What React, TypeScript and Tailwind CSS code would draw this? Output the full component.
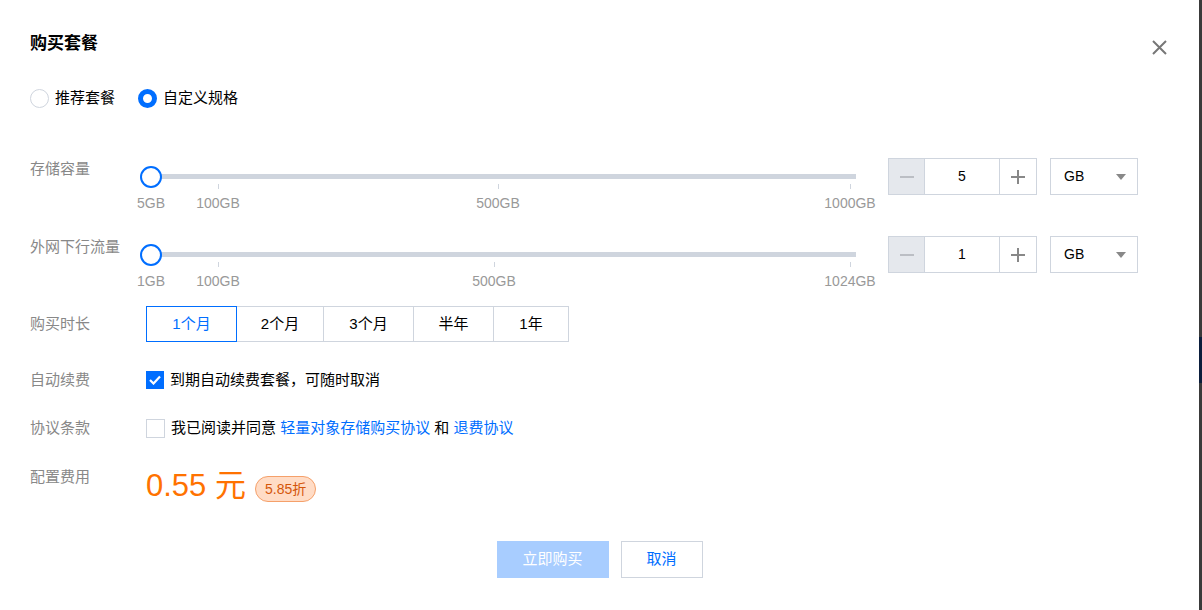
import { useState } from "react";

const font = { fontFamily: '"Liberation Sans", "Noto Sans CJK SC", sans-serif' };

interface Mark {
  label: string;
  tickClass?: string;
  labelClass: string;
}

const storageMarks: Mark[] = [
  { label: "5GB", labelClass: "left-[5px]" },
  { label: "100GB", tickClass: "left-[72px]", labelClass: "left-[72px]" },
  { label: "500GB", tickClass: "left-[352px]", labelClass: "left-[352px]" },
  { label: "1000GB", tickClass: "left-[704px]", labelClass: "left-[704px]" },
];

const trafficMarks: Mark[] = [
  { label: "1GB", labelClass: "left-[5px]" },
  { label: "100GB", tickClass: "left-[72px]", labelClass: "left-[72px]" },
  { label: "500GB", tickClass: "left-[348px]", labelClass: "left-[348px]" },
  { label: "1024GB", tickClass: "left-[704px]", labelClass: "left-[704px]" },
];

const durations = [
  { label: "1个月", width: "w-[91px]" },
  { label: "2个月", width: "w-[88px]" },
  { label: "3个月", width: "w-[91px]" },
  { label: "半年", width: "w-[81px]" },
  { label: "1年", width: "w-[76px]" },
];

const Slider = ({ marks }: { marks: Mark[] }) => (
  <div className="relative w-[732px] h-[55px]">
    <div className="absolute left-[5px] top-[16px] w-[705px] h-[5px] bg-[#cfd5de]" />
    {marks.map((m) =>
      m.tickClass ? (
        <div key={"t" + m.label} className={`absolute top-[26px] w-px h-[5px] bg-[#cfd5de] ${m.tickClass}`} />
      ) : null
    )}
    {marks.map((m) => (
      <span
        key={m.label}
        className={`absolute top-[35px] -translate-x-1/2 text-[14px] leading-[20px] text-[#999] whitespace-nowrap ${m.labelClass}`}
      >
        {m.label}
      </span>
    ))}
    <div className="absolute left-[-6px] top-[8px] w-[22px] h-[22px] rounded-full border-2 border-[#006eff] bg-white" />
  </div>
);

const NumberInput = ({ value }: { value: string }) => (
  <div className="flex h-[37px] border border-[#cfd5de] ml-[10px]">
    <div className="w-[36px] bg-[#e5e8ed] border-r border-[#cfd5de] flex items-center justify-center">
      <div className="w-[14px] h-[2px] bg-[#bbbec4]" />
    </div>
    <div className="w-[74px] flex items-center justify-center text-[14px] text-[#000]">{value}</div>
    <div className="w-[37px] border-l border-[#cfd5de] flex items-center justify-center">
      <svg width="14" height="14" viewBox="0 0 14 14">
        <path d="M7 0v14M0 7h14" stroke="#888" strokeWidth="2" />
      </svg>
    </div>
  </div>
);

const UnitSelect = () => (
  <div className="ml-[13px] w-[88px] h-[37px] border border-[#cfd5de] flex items-center justify-between pl-[13px] pr-[11px] text-[14px] text-[#000]">
    <span>GB</span>
    <svg width="10" height="6" viewBox="0 0 10 6">
      <path d="M0 0h10L5 6z" fill="#888" />
    </svg>
  </div>
);

const Label = ({ children }: { children: React.ReactNode }) => (
  <div className="w-[116px] shrink-0 text-[15px] leading-[22px] text-[#888]">{children}</div>
);

export default function App() {
  const [mode, setMode] = useState("custom");
  const [duration, setDuration] = useState("1个月");
  const [autoRenew, setAutoRenew] = useState(true);
  const [agree, setAgree] = useState(false);

  return (
    <div className="flex h-[610px] w-full" style={font}>
      <div className="relative flex-1 bg-white px-[30px] pt-[32px] text-[#333]">
        <button className="absolute right-[32px] top-[40px] w-[15px] h-[15px]">
          <svg width="15" height="15" viewBox="0 0 15 15">
            <path d="M1 1l13 13M14 1L1 14" stroke="#777" strokeWidth="2" />
          </svg>
        </button>

        <h2 className="h-[24px] text-[17px] leading-[24px] font-bold text-[#000]">购买套餐</h2>

        <div className="mt-[32px] flex items-center h-[20px] text-[15px] text-[#000]">
          <label className="flex items-center cursor-pointer" onClick={() => setMode("recommend")}>
            {mode === "recommend" ? (
              <span className="w-[19px] h-[19px] rounded-full border-[5px] border-[#006eff] bg-white" />
            ) : (
              <span className="w-[19px] h-[19px] rounded-full border border-[#cfd5de] bg-white" />
            )}
            <span className="ml-[6px]">推荐套餐</span>
          </label>
          <label className="ml-[23px] flex items-center cursor-pointer" onClick={() => setMode("custom")}>
            {mode === "custom" ? (
              <span className="w-[19px] h-[19px] rounded-full border-[5px] border-[#006eff] bg-white" />
            ) : (
              <span className="w-[19px] h-[19px] rounded-full border border-[#cfd5de] bg-white" />
            )}
            <span className="ml-[6px]">自定义规格</span>
          </label>
        </div>

        <div className="mt-[50px] flex items-start h-[78px]">
          <Label>存储容量</Label>
          <Slider marks={storageMarks} />
          <NumberInput value="5" />
          <UnitSelect />
        </div>

        <div className="flex items-start h-[70px]">
          <Label>外网下行流量</Label>
          <Slider marks={trafficMarks} />
          <NumberInput value="1" />
          <UnitSelect />
        </div>

        <div className="flex items-start">
          <div className="w-[116px] shrink-0 text-[15px] leading-[36px] text-[#888]">购买时长</div>
          <div className="flex">
            {durations.map((d, i) => (
              <button
                key={d.label}
                onClick={() => setDuration(d.label)}
                className={`h-[36px] ${d.width} border text-[15px] ${i > 0 ? "-ml-px" : ""} ${
                  duration === d.label ? "relative z-10 border-[#006eff] text-[#006eff]" : "border-[#cfd5de] text-[#000]"
                }`}
              >
                {d.label}
              </button>
            ))}
          </div>
        </div>

        <div className="mt-[27px] flex items-center h-[22px]">
          <Label>自动续费</Label>
          <button
            onClick={() => setAutoRenew(!autoRenew)}
            className={`w-[18px] h-[18px] flex items-center justify-center ${
              autoRenew ? "bg-[#006eff]" : "border border-[#cfd5de] bg-white"
            }`}
          >
            {autoRenew && (
              <svg width="12" height="10" viewBox="0 0 12 10">
                <path d="M1 5l3.5 3.5L11 1.5" stroke="#fff" strokeWidth="2.2" fill="none" />
              </svg>
            )}
          </button>
          <span className="ml-[6px] text-[15px] text-[#000]">到期自动续费套餐，可随时取消</span>
        </div>

        <div className="mt-[26px] flex items-center h-[22px]">
          <Label>协议条款</Label>
          <button
            onClick={() => setAgree(!agree)}
            className={`w-[19px] h-[19px] flex items-center justify-center ${
              agree ? "bg-[#006eff]" : "border border-[#cfd5de] bg-white"
            }`}
          />
          <span className="ml-[6px] text-[15px] text-[#000]">
            我已阅读并同意 <a className="text-[#006eff]">轻量对象存储购买协议</a> 和{" "}
            <a className="text-[#006eff]">退费协议</a>
          </span>
        </div>

        <div className="mt-[27px] flex items-start h-[40px]">
          <Label>配置费用</Label>
          <div className="flex items-center h-[40px]">
            <span className="text-[31px] leading-[40px] text-[#ff7200]">0.55 元</span>
            <span className="ml-[9px] mt-[6px] h-[26px] px-[9px] rounded-full border border-[#f5a06a] bg-[#ffdcc6] text-[14px] leading-[24px] text-[#d4560a]">
              5.85折
            </span>
          </div>
        </div>

        <div className="mt-[35px] flex justify-center gap-[12px]">
          <button className="w-[112px] h-[37px] bg-[#a8cdff] text-white text-[15px]">立即购买</button>
          <button className="w-[82px] h-[37px] border border-[#cfd5de] bg-white text-[#006eff] text-[15px]">取消</button>
        </div>
      </div>
      <div className="w-[3px] flex flex-col bg-[#3a3a3a]">
        <div className="h-[337px]" />
        <div className="h-[46px] bg-[#0b1e3c]" />
      </div>
    </div>
  );
}
